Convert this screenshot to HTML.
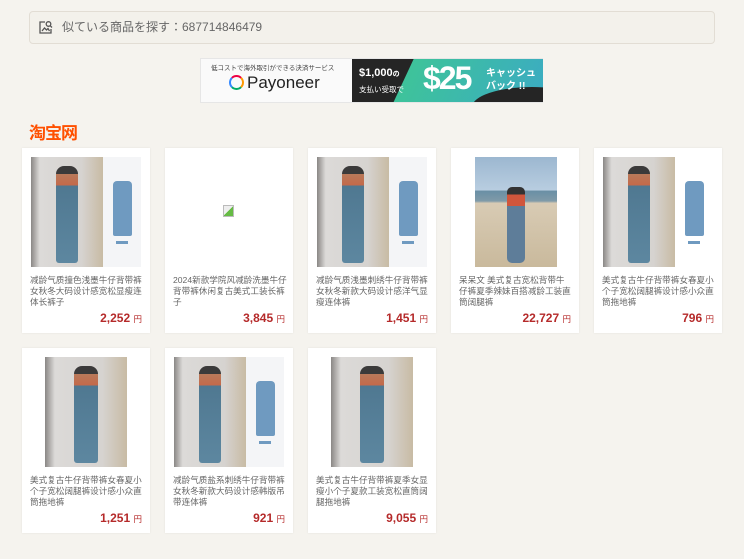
<!DOCTYPE html>
<html><head><meta charset="utf-8"><style>
*{margin:0;padding:0;box-sizing:border-box}
body{width:744px;height:559px;background:#f5f3ee;font-family:"Liberation Sans","Noto Sans CJK JP",sans-serif;position:relative;overflow:hidden}
.search{position:absolute;left:29px;top:11px;width:686px;height:33px;border:1px solid #e2ddd4;border-radius:4px;background:#f3f1eb;color:#666;font-size:12px;line-height:31px;padding-left:32px}
.search svg{position:absolute;left:8px;top:8px}
.ad{position:absolute;left:200px;top:58px;width:343px;height:45px;border:1px solid #e6e6e6;background:#f8f8f8}
.tb{position:absolute;left:29px;top:119px;font-size:17px;font-weight:bold;color:#ff5000;font-family:"Noto Sans CJK SC",sans-serif;letter-spacing:-1px}
.card{position:absolute;width:128px;height:185px;background:#fff;box-shadow:0 0 2px rgba(0,0,0,.08)}
.t{position:absolute;left:8px;top:127px;width:114px;font-size:8.6px;line-height:11px;color:#666}
.p{position:absolute;right:8px;top:163px;font-size:12px;font-weight:bold;color:#b52a2a}
.p span{font-size:8.5px;font-weight:normal;color:#b52a2a}
.img{position:absolute;top:9px;height:110px;overflow:hidden}
.ph{position:absolute;top:0;height:110px;background:linear-gradient(90deg,#8a8785 0,#dcdad8 12%,#d6d3d0 70%,#c8bba4 100%)}
.ph i{position:absolute;left:35%;top:8%;width:30%;height:88%;background:linear-gradient(#3b3a3a 0,#3b3a3a 8%,#b87a5a 8%,#c4694a 20%,#4f7891 20%,#5d87a0 100%);border-radius:8px 8px 3px 3px}
.ov{position:absolute;top:0;height:110px;background:#f4f5f7}
.ov i{position:absolute;left:25%;top:22%;width:50%;height:50%;background:#6f9ac0;border-radius:4px 4px 2px 2px}
.ov b{position:absolute;left:35%;top:76%;width:30%;height:3px;background:#6f9ac0}
</style></head><body>
<div class="search"><svg width="15" height="15" viewBox="0 0 15 15" fill="none" stroke="#555" stroke-width="1.3"><path d="M7 2H2v11h11V9"/><circle cx="10.5" cy="4" r="2.3"/><path d="M12.2 5.7l1.8 1.8M4 11l2.5-3 2 2 1.5-1.5 1.5 2.5"/></svg>似ている商品を探す：687714846479</div>
<div class="ad">
<div style="position:absolute;left:0;top:0;width:151px;height:43px;background:#fafafa">
<div style="position:absolute;left:10px;top:3px;font-size:6.5px;color:#444">低コストで海外取引ができる決済サービス</div>
<div style="position:absolute;left:28px;top:16px;width:15px;height:15px;border-radius:50%;border:2.5px solid;border-color:#e04 #f90 #0a6 #38f"></div>
<div style="position:absolute;left:46px;top:14px;font-size:17px;color:#222">Payoneer</div></div>
<div style="position:absolute;left:151px;top:0;width:191px;height:43px;background:#252525;overflow:hidden">
<div style="position:absolute;left:50px;top:-20px;width:200px;height:90px;background:linear-gradient(90deg,#3ec39a,#3aa3d0);transform:skewX(-25deg)"></div>
<div style="position:absolute;left:120px;top:28px;width:120px;height:40px;border-radius:50%;background:#252525"></div>
<div style="position:absolute;left:7px;top:8px;color:#fff;font-size:11px;font-weight:bold">$1,000<span style="font-size:7px">の</span></div>
<div style="position:absolute;left:7px;top:25px;color:#fff;font-size:7.5px">支払い受取で</div>
<div style="position:absolute;left:71px;top:1px;color:#fff;font-size:32px;font-weight:bold;letter-spacing:-2px">$25</div>
<div style="position:absolute;left:134px;top:8px;color:#fff;font-size:10px;font-weight:bold;line-height:13px">キャッシュ<br>バック !!</div></div>
</div>
<div class="tb">淘宝网</div>

<div class="card" style="left:22px;top:148px"><div class="img" style="left:9px;width:110px"><div class="ph" style="left:0;width:72px"><i></i></div><div class="ov" style="left:72px;width:38px"><i></i><b></b></div></div><div class="t">减龄气质撞色浅墨牛仔背带裤女秋冬大码设计感宽松显瘦连体长裤子</div><div class="p">2,252 <span>円</span></div></div>
<div class="card" style="left:165px;top:148px"><div style="position:absolute;left:58px;top:57px;width:11px;height:12px;border:1px solid #bbb;background:linear-gradient(135deg,#eee 50%,#6b4 50%)"></div><div class="t">2024新款学院风减龄洗墨牛仔背带裤休闲复古美式工装长裤子</div><div class="p">3,845 <span>円</span></div></div>
<div class="card" style="left:308px;top:148px"><div class="img" style="left:9px;width:110px"><div class="ph" style="left:0;width:72px"><i></i></div><div class="ov" style="left:72px;width:38px"><i></i><b></b></div></div><div class="t">减龄气质浅墨刺绣牛仔背带裤女秋冬新款大码设计感洋气显瘦连体裤</div><div class="p">1,451 <span>円</span></div></div>
<div class="card" style="left:451px;top:148px"><div class="img" style="left:24px;width:82px;background:linear-gradient(#9cb7d0 0,#b8cde0 30%,#6a8fa5 31%,#7f9aa8 40%,#d8cbb4 42%,#c9b99c 100%)"><i style="position:absolute;left:32px;top:30px;width:18px;height:76px;background:linear-gradient(#333 0,#333 10%,#d0563c 10%,#d0563c 25%,#5e7d99 25%);border-radius:5px"></i></div><div class="t">呆呆文 美式复古宽松背带牛仔裤夏季辣妹百搭减龄工装直筒阔腿裤</div><div class="p">22,727 <span>円</span></div></div>
<div class="card" style="left:594px;top:148px"><div class="img" style="left:9px;width:110px"><div class="ph" style="left:0;width:72px"><i></i></div><div class="ov" style="left:72px;width:38px;background:#fff"><i></i><b></b></div></div><div class="t">美式复古牛仔背带裤女春夏小个子宽松阔腿裤设计感小众直筒拖地裤</div><div class="p">796 <span>円</span></div></div>

<div class="card" style="left:22px;top:348px"><div class="img" style="left:23px;width:82px"><div class="ph" style="left:0;width:82px"><i></i></div></div><div class="t">美式复古牛仔背带裤女春夏小个子宽松阔腿裤设计感小众直筒拖地裤</div><div class="p">1,251 <span>円</span></div></div>
<div class="card" style="left:165px;top:348px"><div class="img" style="left:9px;width:110px"><div class="ph" style="left:0;width:72px"><i></i></div><div class="ov" style="left:72px;width:38px"><i></i><b></b></div></div><div class="t">减龄气质盐系刺绣牛仔背带裤女秋冬新款大码设计感韩版吊带连体裤</div><div class="p">921 <span>円</span></div></div>
<div class="card" style="left:308px;top:348px"><div class="img" style="left:23px;width:82px"><div class="ph" style="left:0;width:82px"><i></i></div></div><div class="t">美式复古牛仔背带裤夏季女显瘦小个子夏款工装宽松直筒阔腿拖地裤</div><div class="p">9,055 <span>円</span></div></div>
</body></html>
